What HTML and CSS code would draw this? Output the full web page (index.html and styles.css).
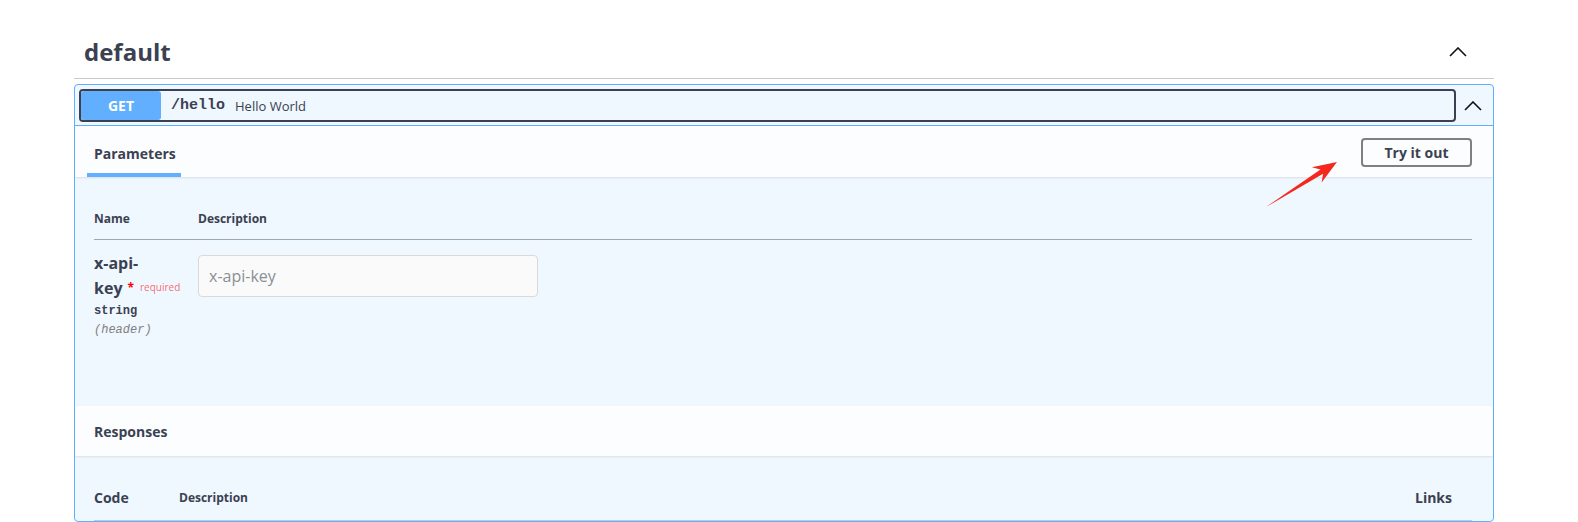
FILE: index.html
```html
<!DOCTYPE html>
<html lang="en">
<head>
  <meta charset="UTF-8">
  <meta name="viewport" content="width=device-width, initial-scale=1.0">
  <title>default - API</title>
  <link rel="stylesheet" href="styles.css">
</head>
<body>
  <div class="wrapper">
    <h3 class="tag">
      <span>default</span>
      <svg class="chevron" width="18" height="10" viewBox="0 0 18 10"><polyline points="1,9 9,1 17,9"/></svg>
    </h3>

    <div class="opblock">
      <div class="summary">
        <div class="summary-control">
          <span class="method">GET</span>
          <span class="path">/hello</span>
          <span class="summary-desc">Hello World</span>
        </div>
        <button class="arrow">
          <svg class="chevron" width="18" height="10" viewBox="0 0 18 10"><polyline points="1,9 9,1 17,9"/></svg>
        </button>
      </div>

      <div class="section-header">
        <div class="tab"><h4>Parameters</h4></div>
        <button class="try-out">Try it out</button>
      </div>

      <div class="table-container">
        <table class="parameters">
          <thead>
            <tr>
              <th class="col-name">Name</th>
              <th>Description</th>
            </tr>
          </thead>
          <tbody>
            <tr>
              <td class="col-name">
                <div class="param-name">x-api-<span class="nowrap">key<span class="star">*</span><span class="required">required</span></span></div>
                <div class="param-type">string</div>
                <div class="param-in">(header)</div>
              </td>
              <td class="col-desc">
                <input type="text" placeholder="x-api-key">
              </td>
            </tr>
          </tbody>
        </table>
      </div>

      <div class="section-header responses-header">
        <h4>Responses</h4>
      </div>

      <div class="responses-inner">
        <table class="responses">
          <thead>
            <tr>
              <th class="col-status">Code</th>
              <th class="col-desc-head">Description</th>
              <th class="col-links">Links</th>
            </tr>
          </thead>
        </table>
      </div>
    </div>
  </div>

  <!-- annotation arrow drawn over the page -->
  <svg class="pointer" width="90" height="65" viewBox="0 0 90 65">
    <polygon points="10,57 67.1,23.7 65.6,32.5 81,12 55.9,17.3 64.5,19.5"/>
  </svg>
</body>
</html>
```

FILE: styles.css
```css
:root {
  --text: #3b4151;
  --get: #61affe;
  --get-bg: #eff7ff;
  --header-bg: #fcfdff;
  --line: rgba(59, 65, 81, 0.25);
}

* {
  margin: 0;
  padding: 0;
  box-sizing: border-box;
}

body {
  font-family: 'Open Sans', 'Noto Sans', sans-serif;
  color: var(--text);
  background: #ffffff;
  position: relative;
  padding-top: 26px;
}

.wrapper {
  margin-left: 74px;
  width: 1420px;
}

.tag {
  display: flex;
  align-items: center;
  justify-content: space-between;
  padding: 10px 27px 10px 10px;
  font-size: 24px;
  line-height: 32px;
  font-weight: 700;
  border-bottom: 1px solid #c8c9cc;
  margin-bottom: 5px;
}

.chevron polyline {
  fill: none;
  stroke: #111;
  stroke-width: 1.6;
}

.opblock {
  border: 1px solid var(--get);
  border-radius: 4px;
  background: var(--get-bg);
}

.summary {
  display: flex;
  align-items: center;
  padding: 4px 4px 3px 4px;
  border-bottom: 1px solid var(--get);
}

.summary-control {
  flex: 1;
  display: flex;
  align-items: center;
  height: 33px;
  border: 2px solid var(--text);
  border-radius: 4px;
}

.method {
  width: 80px;
  height: 29px;
  line-height: 29px;
  background: var(--get);
  border-radius: 3px;
  color: #ffffff;
  font-size: 14px;
  font-weight: 700;
  text-align: center;
}

.path {
  margin-left: 10px;
  font-family: 'Liberation Mono', monospace;
  font-size: 15px;
  font-weight: 700;
}

.summary-desc {
  margin-left: 10px;
  font-size: 13px;
}

.arrow {
  width: 33px;
  height: 33px;
  border: none;
  background: transparent;
  display: flex;
  align-items: center;
  justify-content: center;
}

.section-header {
  display: flex;
  align-items: center;
  justify-content: space-between;
  height: 51px;
  background: var(--header-bg);
  box-shadow: 0 1px 2px rgba(0, 0, 0, 0.1);
  padding: 0 21px 0 12px;
}

.section-header h4 {
  font-size: 14px;
  font-weight: 700;
}

.tab {
  height: 51px;
  display: flex;
  align-items: center;
  padding: 7px 7px 0 7px;
  width: 94px;
  border-bottom: 4px solid var(--get);
}

.try-out {
  width: 111px;
  height: 29px;
  border: 2px solid #808080;
  border-radius: 4px;
  background: transparent;
  font-family: inherit;
  font-size: 14px;
  font-weight: 700;
  color: var(--text);
  margin-top: 2px;
}

.table-container {
  height: 229px;
  padding: 22px 21px 0 19px;
}

table {
  width: 100%;
  border-collapse: collapse;
}

th {
  text-align: left;
  font-size: 12px;
  font-weight: 700;
  line-height: 16px;
  padding: 12px 0;
  border-bottom: 1px solid var(--line);
}

.parameters .col-name {
  width: 104px;
}

td {
  vertical-align: top;
}

td.col-name {
  padding-top: 11px;
}

td.col-desc {
  padding-top: 15px;
}

.param-name {
  font-size: 16px;
  font-weight: 700;
  line-height: 24px;
}

.nowrap {
  white-space: nowrap;
}

.star {
  margin-left: 5px;
  color: #ff0000;
  font-size: 12px;
  vertical-align: 2px;
}

.required {
  margin-left: 6px;
  color: rgba(255, 0, 0, 0.6);
  font-size: 10px;
  font-weight: 400;
  vertical-align: 3px;
}

.param-type {
  font-family: 'Liberation Mono', monospace;
  font-size: 12px;
  font-weight: 700;
  line-height: 22px;
}

.param-in {
  font-family: 'Liberation Mono', monospace;
  font-size: 12px;
  font-style: italic;
  color: #808080;
  line-height: 16px;
}

input {
  width: 340px;
  height: 42px;
  border: 1px solid #d9d9d9;
  border-radius: 4px;
  background: #fafafa;
  padding: 0 10px;
  font-family: inherit;
  font-size: 16px;
  color: var(--text);
}

input::placeholder {
  color: #8b8e95;
}

.responses-header {
  height: 50px;
  padding-left: 19px;
}

.responses-inner {
  padding: 20px 21px 0 19px;
}

.responses th {
  line-height: 20px;
}

.responses .col-status {
  width: 85px;
  font-size: 14px;
}

.responses .col-links {
  text-align: right;
  padding-right: 20px;
  font-size: 14px;
}

.pointer {
  position: absolute;
  left: 1256px;
  top: 150px;
}

.pointer polygon {
  fill: #f5281d;
}
```
